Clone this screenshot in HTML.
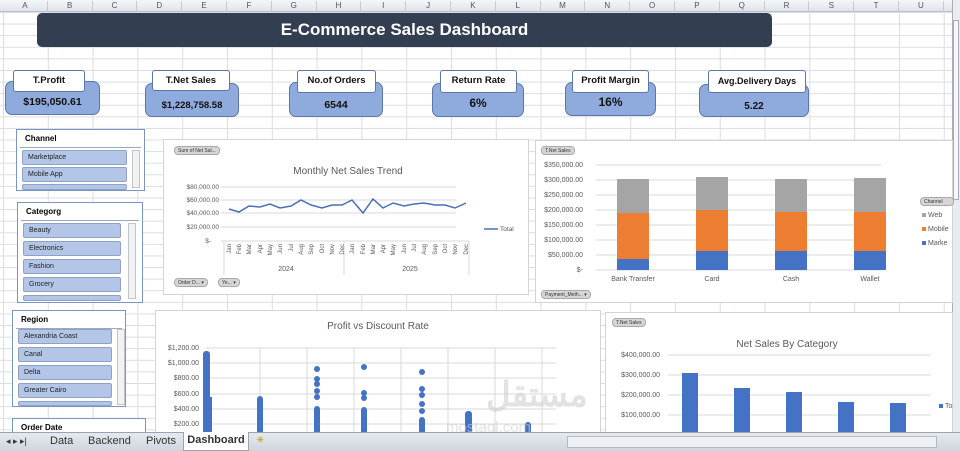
<!DOCTYPE html>
<html><head><meta charset="utf-8"><style>
*{margin:0;padding:0;box-sizing:border-box}
body{width:960px;height:451px;overflow:hidden;position:relative;background:#fff;font-family:"Liberation Sans",sans-serif}
.grid{position:absolute;left:0;top:12px;width:952px;height:420px;
background-image:linear-gradient(to right,#d9dde3 1px,transparent 1px),linear-gradient(to bottom,#d9dde3 1px,transparent 1px);
background-size:44.8px 11.6px;background-position:3px 0,0 0}
.hdr{position:absolute;left:0;top:0;width:952px;height:12px;background:linear-gradient(#f4f6f9,#dfe4ea);border-bottom:1px solid #b8c0cc;font-size:8px;color:#555}
.hdr span{position:absolute;top:1px;width:44.8px;text-align:center;border-right:1px solid #c4cad3;height:11px}
.a{position:absolute}
.title{left:37px;top:13px;width:735px;height:34px;background:#333f50;border-radius:5px;color:#fff;font-weight:bold;font-size:17px;text-align:center;line-height:34px}
.kb{background:#8faadc;border:1px solid #5b77a8;border-radius:7px;font-weight:bold;font-size:10.5px;color:#111;text-align:center}
.kl{background:#fff;border:1px solid #5b77a8;border-radius:3px;font-weight:bold;font-size:9.5px;text-align:center;line-height:20px;color:#111}
.sl{background:#fff;border:1px solid #7b95c0}
.sl .h{font-size:8px;font-weight:bold;padding:4px 5px;border-bottom:1px solid #9aa9c2;margin:0 3px}
.it{position:absolute;left:5px;height:15px;background:#b4c6e7;border:1px solid #8ea2c6;border-radius:2px;font-size:7px;line-height:14px;padding-left:5px;color:#222}
.sb{position:absolute;width:8px;border:1px solid #c0c4cc;background:#f2f2f2}
.chart{background:#fff;border:1px solid #d4d4d4}
.btn{position:absolute;background:#d6d6d6;border:1px solid #aaa;border-radius:4px;font-size:5px;color:#333;height:9px;line-height:8px;padding:0 3px}
svg text{font-family:"Liberation Sans",sans-serif}
.tabs{left:0;top:432px;width:960px;height:19px;background:linear-gradient(#e6e9ee,#cfd5dd);border-top:1px solid #9aa3b0;font-size:11px;color:#333}
</style></head><body>
<div class="grid"></div>
<div class="hdr">
<span style="left:3px">A</span><span style="left:47.8px">B</span><span style="left:92.6px">C</span><span style="left:137.4px">D</span><span style="left:182.2px">E</span><span style="left:227px">F</span><span style="left:271.8px">G</span><span style="left:316.6px">H</span><span style="left:361.4px">I</span><span style="left:406.2px">J</span><span style="left:451px">K</span><span style="left:495.8px">L</span><span style="left:540.6px">M</span><span style="left:585.4px">N</span><span style="left:630.2px">O</span><span style="left:675px">P</span><span style="left:719.8px">Q</span><span style="left:764.6px">R</span><span style="left:809.4px">S</span><span style="left:854.2px">T</span><span style="left:899px">U</span>
</div>
<div class="a" style="left:952px;top:0;width:8px;height:432px;background:#e8ebef;border-left:1px solid #aab"></div>
<div class="a" style="left:953px;top:20px;width:6px;height:180px;background:#f6f7f9;border:1px solid #aab"></div>

<div class="a title">E-Commerce Sales Dashboard</div>

<div class="a kb" style="left:5px;top:81px;width:95px;height:34px;padding-top:14px">$195,050.61</div>
<div class="a kl" style="left:13px;top:70px;width:72px;height:22px">T.Profit</div>
<div class="a kb" style="left:145px;top:83px;width:94px;height:34px;padding-top:16px;font-size:9.5px">$1,228,758.58</div>
<div class="a kl" style="left:152px;top:70px;width:78px;height:21px">T.Net Sales</div>
<div class="a kb" style="left:289px;top:82px;width:94px;height:35px;padding-top:16px">6544</div>
<div class="a kl" style="left:297px;top:70px;width:79px;height:23px">No.of Orders</div>
<div class="a kb" style="left:432px;top:83px;width:92px;height:34px;padding-top:12px;font-size:12px">6%</div>
<div class="a kl" style="left:440px;top:70px;width:77px;height:23px">Return Rate</div>
<div class="a kb" style="left:565px;top:82px;width:91px;height:34px;padding-top:12px;font-size:12px">16%</div>
<div class="a kl" style="left:572px;top:70px;width:77px;height:23px">Profit Margin</div>
<div class="a kb" style="left:699px;top:84px;width:110px;height:33px;padding-top:16px;font-size:10px">5.22</div>
<div class="a kl" style="left:708px;top:70px;width:98px;height:23px;font-size:9px">Avg.Delivery Days</div>

<!-- slicers -->
<div class="a sl" style="left:16px;top:129px;width:129px;height:62px"><div class="h">Channel</div>
<div class="it" style="top:20px;width:105px">Marketplace</div>
<div class="it" style="top:37px;width:105px">Mobile App</div>
<div class="it" style="top:54px;width:105px;height:6px"></div>
<div class="sb" style="left:115px;top:20px;height:38px"></div></div>

<div class="a sl" style="left:17px;top:202px;width:126px;height:101px"><div class="h">Categorg</div>
<div class="it" style="top:20px;width:98px">Beauty</div>
<div class="it" style="top:38px;width:98px">Electronics</div>
<div class="it" style="top:56px;width:98px">Fashion</div>
<div class="it" style="top:74px;width:98px">Grocery</div>
<div class="it" style="top:92px;width:98px;height:6px"></div>
<div class="sb" style="left:110px;top:20px;height:76px"></div></div>

<div class="a sl" style="left:12px;top:310px;width:114px;height:97px"><div class="h">Region</div>
<div class="it" style="top:18px;width:94px">Alexandria Coast</div>
<div class="it" style="top:36px;width:94px">Canal</div>
<div class="it" style="top:54px;width:94px">Delta</div>
<div class="it" style="top:72px;width:94px">Greater Cairo</div>
<div class="it" style="top:90px;width:94px;height:5px"></div>
<div class="sb" style="left:104px;top:18px;height:76px"></div></div>

<div class="a sl" style="left:12px;top:418px;width:134px;height:16px"><div class="h" style="border:0">Order Date</div></div>

<!-- line chart -->
<div class="a chart" style="left:163px;top:139px;width:366px;height:156px">
<div class="btn" style="left:10px;top:6px">Sum of Net Sal...</div>
<div class="btn" style="left:10px;top:138px">Order D... ▾</div>
<div class="btn" style="left:54px;top:138px">Ye... ▾</div>
<svg width="366" height="156" style="position:absolute;left:0;top:0">
<text x="184" y="34" font-size="10" fill="#595959" text-anchor="middle">Monthly  Net Sales Trend</text>
<g stroke="#d9d9d9" stroke-width="1"><line x1="57" y1="47" x2="292" y2="47"/><line x1="57" y1="60" x2="292" y2="60"/><line x1="57" y1="73" x2="292" y2="73"/><line x1="57" y1="87" x2="292" y2="87"/><line x1="57" y1="101" x2="305" y2="101"/>
<line x1="60" y1="101" x2="60" y2="135"/><line x1="180" y1="101" x2="180" y2="135"/><line x1="305" y1="101" x2="305" y2="135"/></g>
<g font-size="6.5" fill="#595959" text-anchor="end"><text x="55" y="49">$80,000.00</text><text x="55" y="62">$60,000.00</text><text x="55" y="75">$40,000.00</text><text x="55" y="89">$20,000.00</text><text x="47" y="103">$-</text></g>
<polyline fill="none" stroke="#4a6fb5" stroke-width="1.5" points="65,69 75,72 85,66 96,67 106,64 116,68 127,66 137,60 147,65 158,68 168,65 178,65 188,60 199,73 209,59 219,68 229,63 240,66 250,64 260,63 271,65 281,65 291,68 302,63"/>
<g font-size="6" fill="#595959" text-anchor="end">
<text transform="translate(67,104) rotate(-90)">Jan</text><text transform="translate(77,104) rotate(-90)">Feb</text><text transform="translate(87,104) rotate(-90)">Mar</text><text transform="translate(98,104) rotate(-90)">Apr</text><text transform="translate(108,104) rotate(-90)">May</text><text transform="translate(118,104) rotate(-90)">Jun</text><text transform="translate(129,104) rotate(-90)">Jul</text><text transform="translate(139,104) rotate(-90)">Aug</text><text transform="translate(149,104) rotate(-90)">Sep</text><text transform="translate(160,104) rotate(-90)">Oct</text><text transform="translate(170,104) rotate(-90)">Nov</text><text transform="translate(180,104) rotate(-90)">Dec</text>
<text transform="translate(190,104) rotate(-90)">Jan</text><text transform="translate(201,104) rotate(-90)">Feb</text><text transform="translate(211,104) rotate(-90)">Mar</text><text transform="translate(221,104) rotate(-90)">Apr</text><text transform="translate(231,104) rotate(-90)">May</text><text transform="translate(242,104) rotate(-90)">Jun</text><text transform="translate(252,104) rotate(-90)">Jul</text><text transform="translate(262,104) rotate(-90)">Aug</text><text transform="translate(273,104) rotate(-90)">Sep</text><text transform="translate(283,104) rotate(-90)">Oct</text><text transform="translate(293,104) rotate(-90)">Nov</text><text transform="translate(304,104) rotate(-90)">Dec</text>
</g>
<text x="122" y="131" font-size="7" fill="#595959" text-anchor="middle">2024</text>
<text x="246" y="131" font-size="7" fill="#595959" text-anchor="middle">2025</text>
<line x1="320" y1="89" x2="334" y2="89" stroke="#4a6fb5" stroke-width="1.5"/>
<text x="336" y="91" font-size="6.5" fill="#595959">Total</text>
</svg>
</div>

<!-- stacked bar chart -->
<div class="a chart" style="left:535px;top:140px;width:418px;height:163px">
<div class="btn" style="left:5px;top:5px">T.Net Sales</div>
<div class="btn" style="left:5px;top:149px">Payment_Meth... ▾</div>
<div class="btn" style="left:384px;top:56px;width:34px">Channel</div>
<svg width="418" height="163" style="position:absolute;left:0;top:0">
<g stroke="#d9d9d9"><line x1="60" y1="24" x2="345" y2="24"/><line x1="60" y1="39" x2="345" y2="39"/><line x1="60" y1="54" x2="345" y2="54"/><line x1="60" y1="69" x2="345" y2="69"/><line x1="60" y1="84" x2="345" y2="84"/><line x1="60" y1="99" x2="345" y2="99"/><line x1="60" y1="114" x2="345" y2="114"/><line x1="60" y1="129" x2="345" y2="129"/></g>
<g font-size="7" fill="#595959" text-anchor="end"><text x="47" y="26">$350,000.00</text><text x="47" y="41">$300,000.00</text><text x="47" y="56">$250,000.00</text><text x="47" y="71">$200,000.00</text><text x="47" y="86">$150,000.00</text><text x="47" y="101">$100,000.00</text><text x="47" y="116">$50,000.00</text><text x="47" y="131">$-</text></g>
<g><rect x="81" y="38" width="32" height="34" fill="#a5a5a5"/><rect x="81" y="72" width="32" height="46" fill="#ed7d31"/><rect x="81" y="118" width="32" height="11" fill="#4472c4"/>
<rect x="160" y="36" width="32" height="33" fill="#a5a5a5"/><rect x="160" y="69" width="32" height="41" fill="#ed7d31"/><rect x="160" y="110" width="32" height="19" fill="#4472c4"/>
<rect x="239" y="38" width="32" height="33" fill="#a5a5a5"/><rect x="239" y="71" width="32" height="39" fill="#ed7d31"/><rect x="239" y="110" width="32" height="19" fill="#4472c4"/>
<rect x="318" y="37" width="32" height="34" fill="#a5a5a5"/><rect x="318" y="71" width="32" height="39" fill="#ed7d31"/><rect x="318" y="110" width="32" height="19" fill="#4472c4"/></g>
<g font-size="7" fill="#595959" text-anchor="middle"><text x="97" y="140">Bank Transfer</text><text x="176" y="140">Card</text><text x="255" y="140">Cash</text><text x="334" y="140">Wallet</text></g>
<rect x="386" y="72" width="4" height="4" fill="#a5a5a5"/><text x="392" y="76" font-size="7" fill="#595959">Web</text>
<rect x="386" y="86" width="4" height="4" fill="#ed7d31"/><text x="392" y="90" font-size="7" fill="#595959">Mobile</text>
<rect x="386" y="100" width="4" height="4" fill="#4472c4"/><text x="392" y="104" font-size="7" fill="#595959">Marke</text>
</svg></div>

<!-- scatter -->
<div class="a chart" style="left:155px;top:310px;width:446px;height:124px;border-bottom:0">
<svg width="446" height="124" style="position:absolute;left:0;top:0">
<text x="222" y="18" font-size="10" fill="#595959" text-anchor="middle">Profit vs Discount Rate</text>
<g stroke="#d9d9d9"><line x1="50" y1="37" x2="400" y2="37"/><line x1="50" y1="52" x2="400" y2="52"/><line x1="50" y1="67" x2="400" y2="67"/><line x1="50" y1="83" x2="400" y2="83"/><line x1="50" y1="98" x2="400" y2="98"/><line x1="50" y1="113" x2="400" y2="113"/>
<line x1="104" y1="37" x2="104" y2="124"/><line x1="151" y1="37" x2="151" y2="124"/><line x1="198" y1="37" x2="198" y2="124"/><line x1="245" y1="37" x2="245" y2="124"/><line x1="292" y1="37" x2="292" y2="124"/><line x1="339" y1="37" x2="339" y2="124"/><line x1="386" y1="37" x2="386" y2="124"/></g>
<g font-size="7" fill="#595959" text-anchor="end"><text x="43" y="39">$1,200.00</text><text x="43" y="54">$1,000.00</text><text x="43" y="69">$800.00</text><text x="43" y="85">$600.00</text><text x="43" y="100">$400.00</text><text x="43" y="115">$200.00</text></g>
<g fill="#4472c4"><rect x="47" y="40" width="7" height="84" rx="3"/><rect x="48" y="86" width="8" height="38"/>
<rect x="101" y="85" width="6" height="39" rx="3"/>
<rect x="158" y="95" width="6" height="29" rx="3"/><circle cx="161" cy="68" r="3"/><circle cx="161" cy="80" r="3"/><circle cx="161" cy="86" r="3"/><circle cx="161" cy="58" r="3"/><circle cx="161" cy="73" r="3"/>
<rect x="205" y="96" width="6" height="28" rx="3"/><circle cx="208" cy="56" r="3"/><circle cx="208" cy="82" r="3"/><circle cx="208" cy="87" r="3"/>
<rect x="263" y="106" width="6" height="18" rx="3"/><circle cx="266" cy="61" r="3"/><circle cx="266" cy="78" r="3"/><circle cx="266" cy="84" r="3"/><circle cx="266" cy="93" r="3"/><circle cx="266" cy="100" r="3"/>
<rect x="309" y="100" width="7" height="24" rx="3"/>
<rect x="369" y="111" width="6" height="13" rx="3"/></g>
<text x="330" y="95" font-size="34" font-weight="bold" fill="#cfcfcf" opacity="0.6" font-family="DejaVu Sans">مستقل</text>
<text x="290" y="121" font-size="15" fill="#cfcfcf" opacity="0.6">mostaql.com</text>
</svg></div>

<!-- category chart -->
<div class="a chart" style="left:605px;top:312px;width:348px;height:122px;border-bottom:0">
<div class="btn" style="left:6px;top:5px">T.Net Sales</div>
<svg width="348" height="122" style="position:absolute;left:0;top:0">
<text x="181" y="34" font-size="10" fill="#595959" text-anchor="middle">Net Sales By Category</text>
<g stroke="#d9d9d9"><line x1="62" y1="42" x2="325" y2="42"/><line x1="62" y1="62" x2="325" y2="62"/><line x1="62" y1="82" x2="325" y2="82"/><line x1="62" y1="102" x2="325" y2="102"/></g>
<g font-size="7" fill="#595959" text-anchor="end"><text x="54" y="44">$400,000.00</text><text x="54" y="64">$300,000.00</text><text x="54" y="84">$200,000.00</text><text x="54" y="104">$100,000.00</text></g>
<g fill="#4472c4"><rect x="76" y="60" width="16" height="62"/><rect x="128" y="75" width="16" height="47"/><rect x="180" y="79" width="16" height="43"/><rect x="232" y="89" width="16" height="33"/><rect x="284" y="90" width="16" height="32"/></g>
<rect x="333" y="91" width="4" height="4" fill="#4472c4"/><text x="339" y="95" font-size="7" fill="#595959">To</text>
</svg></div>

<!-- tabs -->
<div class="a tabs">
<span class="a" style="left:6px;top:3px;font-size:9px">◂ ▸ ▸|</span>
<span class="a" style="left:50px;top:2px">Data</span>
<span class="a" style="left:88px;top:2px">Backend</span>
<span class="a" style="left:146px;top:2px">Pivots</span>
<div class="a" style="left:183px;top:-1px;width:66px;height:19px;background:#fff;border:1px solid #9aa3b0;border-top:0;font-weight:bold;text-align:center;line-height:17px">Dashboard</div>
<span class="a" style="left:256px;top:2px;font-size:10px;color:#c8902d">✳</span>
<div class="a" style="left:567px;top:3px;width:370px;height:12px;background:#eef0f3;border:1px solid #b4bac4"></div>
</div>
</body></html>
